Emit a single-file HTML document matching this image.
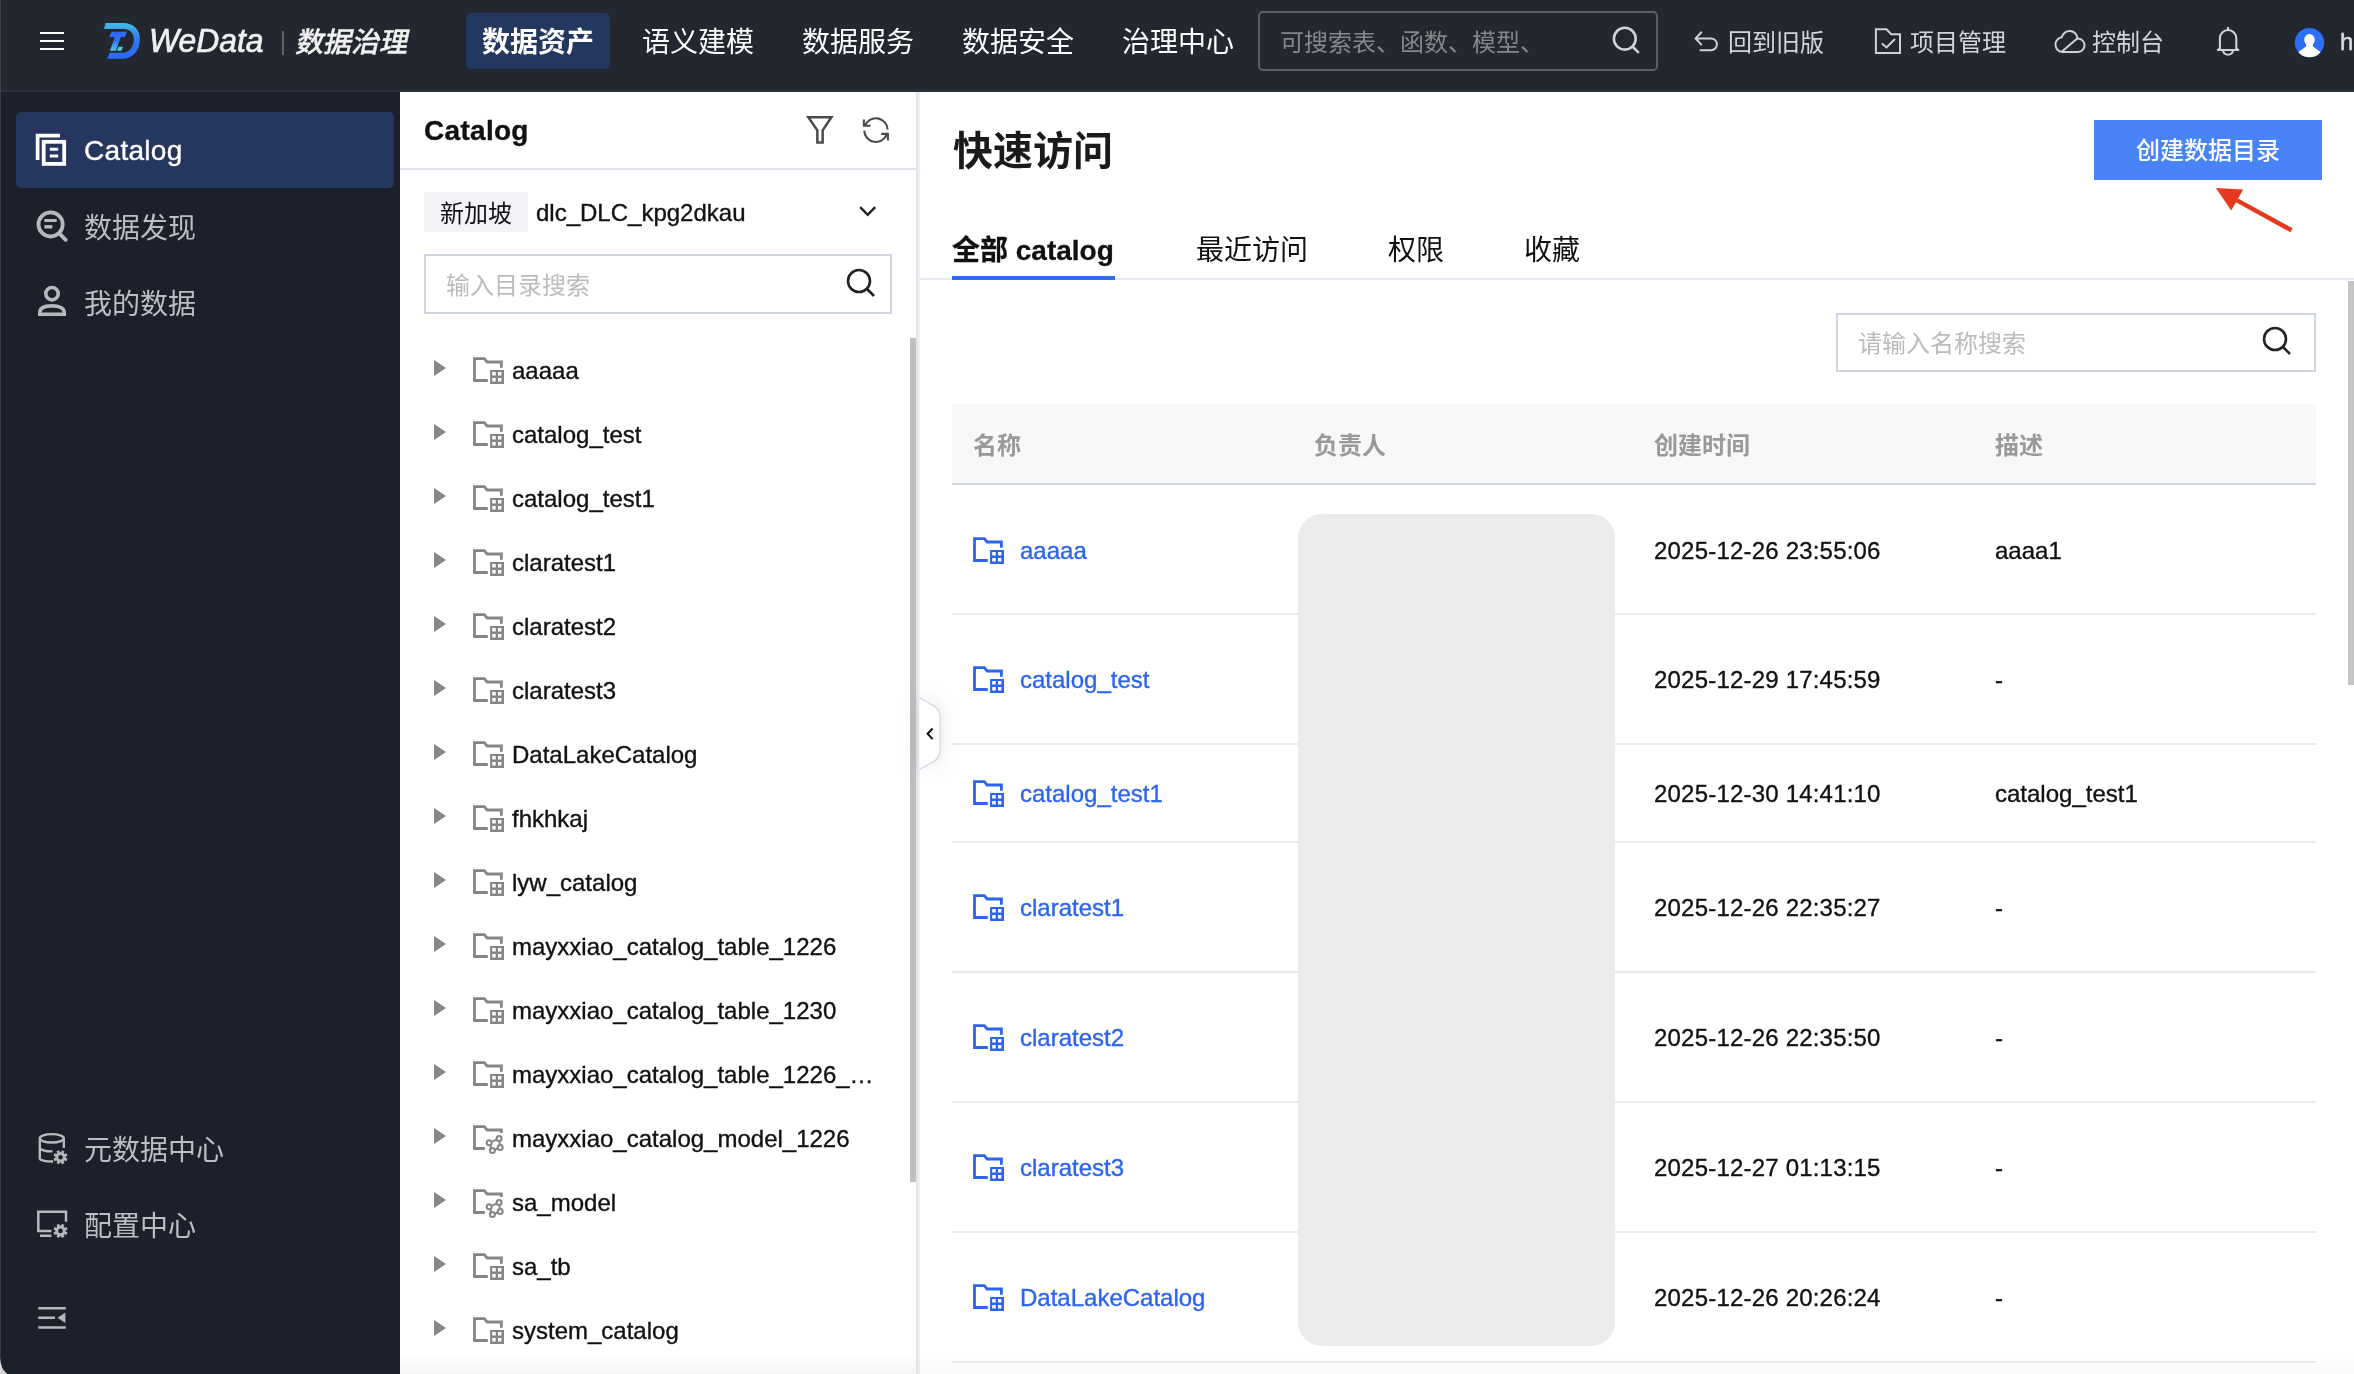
<!DOCTYPE html>
<html lang="zh-CN">
<head>
<meta charset="utf-8">
<title>WeData 数据治理 - Catalog</title>
<style>
*{box-sizing:border-box;margin:0;padding:0}
html,body{width:2354px;height:1374px;overflow:hidden;background:#fff}
@media (max-width:1300px){html{zoom:.5}}
body{font-family:"Liberation Sans","Noto Sans CJK SC",sans-serif;color:#111;position:relative;-webkit-font-smoothing:antialiased;will-change:transform}
.abs{position:absolute}
svg{display:block;overflow:visible}
/* ---------- top bar ---------- */
#top{position:absolute;left:0;top:0;width:2354px;height:92px;background:#232730;border-bottom:2px solid #2d313c}
#top .t{position:absolute;white-space:nowrap;line-height:40px;height:40px;color:#fff}
.nav{font-size:28px;top:23px}
.rt{font-size:24px;top:22.500px;color:#d3d5da !important}
#navact{position:absolute;left:466px;top:13px;width:144px;height:56px;border-radius:5px;background:#243761}
#tsearch{position:absolute;left:1258px;top:11px;width:400px;height:60px;border:2px solid #5d5e61;border-radius:5px}
/* ---------- sidebar ---------- */
#side{position:absolute;left:0;top:92px;width:400px;height:1282px;background:#1c202a}
#side .it{position:absolute;left:84px;font-size:28px;line-height:40px;height:40px;color:#bcbec3;white-space:nowrap}
#sact{position:absolute;left:16px;top:20px;width:378px;height:76px;border-radius:5px;background:#25375f}
/* ---------- catalog panel ---------- */
#cat{position:absolute;left:400px;top:92px;width:518px;height:1282px;background:#fff;border-right:2px solid #dfe3ec}
#cathead{position:absolute;left:0;top:0;width:516px;height:78px;border-bottom:2px solid #dde1ea}
.row{position:absolute;left:0;width:500px;height:64px}
.row .tri{position:absolute;left:34px;top:22px;width:0;height:0;border-left:12.500px solid #898989;border-top:8px solid transparent;border-bottom:8px solid transparent}
.row .nm{position:absolute;left:112px;top:13px;font-size:24px;line-height:40px;color:#111;white-space:nowrap;-webkit-text-stroke:.35px}
.row svg{position:absolute;left:73px;top:19px}
/* ---------- main ---------- */
#main{position:absolute;left:918px;top:92px;width:1436px;height:1282px;background:#fff}
.tab{position:absolute;top:139px;font-size:28px;line-height:40px;white-space:nowrap;color:#111}
.th{position:absolute;top:334px;font-size:24px;line-height:40px;font-weight:bold;color:#999;white-space:nowrap}
.tr{position:absolute;left:34px;width:1364px;border-bottom:2px solid #e7eaf1}
.tr .c{position:absolute;-webkit-text-stroke:.35px;font-size:24px;line-height:40px;white-space:nowrap;color:#111;top:50%;margin-top:-18.500px}
.tr .c1{left:68px;color:#2b64f0}
.tr .c3{left:702px;letter-spacing:.2px}
.tr .c4{left:1043px}
.tr svg{position:absolute;left:21px;top:50%;margin-top:-12.500px}
</style>
</head>
<body>

<!-- ================= TOP BAR ================= -->
<div id="top">
  <svg class="abs" style="left:40px;top:31px" width="24" height="20" viewBox="0 0 24 20"><path d="M0 2h24M0 10h24M0 18h24" stroke="#fff" stroke-width="2" fill="none"/></svg>
  <!-- logo -->
  <svg class="abs" style="left:100px;top:14px" width="180" height="54" viewBox="0 0 2354 706">
    <defs>
      <linearGradient id="lg" x1="0" y1="0" x2="0" y2="1"><stop offset="0" stop-color="#43bce6"/><stop offset="0.5" stop-color="#2f74f5"/><stop offset="1" stop-color="#2d6bf6"/></linearGradient>
      <linearGradient id="lt" x1="0" y1="0" x2="0" y2="1"><stop offset="0" stop-color="#2d68f6"/><stop offset="0.45" stop-color="#2f70f5"/><stop offset="1" stop-color="#55c8e0"/></linearGradient>
    </defs>
    <path d="M72 118H300C440 118 522 205 522 330C522 480 430 585 290 585H93L128 507H290C380 507 442 430 442 330C442 250 392 197 300 197H50Z" fill="url(#lg)"/>
    <path d="M152 232H352L326 300H272L208 482H130L194 300H120Z" fill="url(#lt)"/>
    <path d="M240 428H300L282 482H222Z" fill="#55c8e0"/>
  </svg>
  <div class="t" style="left:149px;top:21px;font-size:33px;font-style:italic;letter-spacing:0;color:#f0f0f1;transform:scaleX(.965);transform-origin:0 0;-webkit-text-stroke:0.7px #f0f0f1">WeData</div>
  <div class="abs" style="left:282px;top:31px;width:2px;height:24px;background:#5d616b"></div>
  <div class="t" style="left:297px;top:23px;font-size:28px;font-weight:500;color:#f0f0f1;transform:skewX(-12deg);-webkit-text-stroke:.4px">数据治理</div>

  <div id="navact"></div>
  <div class="t nav" style="left:482px;font-weight:bold">数据资产</div>
  <div class="t nav" style="left:642px">语义建模</div>
  <div class="t nav" style="left:802px">数据服务</div>
  <div class="t nav" style="left:962px">数据安全</div>
  <div class="t nav" style="left:1122px">治理中心</div>

  <div id="tsearch"></div>
  <div class="t" style="left:1280px;top:22.500px;font-size:24px;color:#868789">可搜索表、函数、模型、</div>
  <svg class="abs" style="left:1611px;top:25px" width="32" height="32" viewBox="0 0 32 32"><circle cx="13.800" cy="13.700" r="10.900" stroke="#d2d3d5" stroke-width="2.600" fill="none"/><path d="M21.500 21.500l6.300 6.300" stroke="#d2d3d5" stroke-width="2.600" fill="none"/></svg>

  <svg class="abs" style="left:1693px;top:29px" width="26" height="24" viewBox="0 0 26 24"><path d="M8.800 2.700L2.600 9.400 8.800 16.100M2.600 9.400H18a5.900 5.900 0 0 1 0 11.800H6.600" stroke="#cfd1d6" stroke-width="2" fill="none"/></svg>
  <div class="t rt" style="left:1728px">回到旧版</div>
  <svg class="abs" style="left:1873px;top:27px" width="30" height="28" viewBox="0 0 30 28"><path d="M2.900 2.300h10.600l4.700 5H27V26H2.900z" stroke="#cfd1d6" stroke-width="2" fill="none"/><path d="M8.900 16.600l4.600 3.800L22 12" stroke="#cfd1d6" stroke-width="2" fill="none"/></svg>
  <div class="t rt" style="left:1910px">项目管理</div>
  <svg class="abs" style="left:2053px;top:28px" width="34" height="28" viewBox="0 0 34 28"><path d="M9.200 24A7.400 7.400 0 0 1 8.800 9.300 8 8 0 0 1 24.600 10.600 6.700 6.700 0 0 1 25.100 24z" stroke="#cfd1d6" stroke-width="2" fill="none" stroke-linejoin="round"/><path d="M9 23.600L24.200 10.400" stroke="#cfd1d6" stroke-width="2" fill="none"/></svg>
  <div class="t rt" style="left:2092px">控制台</div>
  <svg class="abs" style="left:2215px;top:26px" width="26" height="30" viewBox="0 0 26 30"><path d="M13.050 .9v3M4.900 22.300V12.200a8.200 8.200 0 0 1 16.400 0v10.100l2 1.700H2.900z M8.200 24.500a4.800 4.200 0 0 0 9.600 0" stroke="#cfd1d6" stroke-width="2.100" fill="none" stroke-linejoin="round"/></svg>
  <svg class="abs" style="left:2294px;top:27px" width="32" height="32" viewBox="0 0 32 32"><defs><clipPath id="av"><circle cx="15.500" cy="15.600" r="14.700"/></clipPath></defs><circle cx="15.500" cy="15.600" r="14.700" fill="#2d6ef5"/><g clip-path="url(#av)" fill="#fff"><ellipse cx="15.500" cy="12.900" rx="5.300" ry="5.800"/><path d="M12 17h7v2.500l7.500 5.500V32h-22v-7L12 19.500z"/></g></svg>
  <div class="t" style="left:2340px;top:22px;font-size:24px;color:#dcdcdc;-webkit-text-stroke:0.5px #dcdcdc">h</div>
</div>

<!-- ================= SIDEBAR ================= -->
<div id="side">
  <div id="sact"></div>
  <!-- catalog icon -->
  <svg class="abs" style="left:35px;top:41px" width="32" height="34" viewBox="0 0 32 34"><path d="M2.600 27V2.600H25" stroke="#fff" stroke-width="3.700" fill="none"/><rect x="8.700" y="8.800" width="20.500" height="22.100" stroke="#fff" stroke-width="3.800" fill="none"/><path d="M14.800 16.200h8.400M14.800 22.900h8.400" stroke="#fff" stroke-width="3" fill="none"/></svg>
  <div class="it" style="top:39px;color:#fff;letter-spacing:.3px;-webkit-text-stroke:.35px">Catalog</div>
  <!-- discover icon -->
  <svg class="abs" style="left:36px;top:117px" width="32" height="33" viewBox="0 0 32 33"><circle cx="14.600" cy="15.400" r="12.100" stroke="#b6b8bc" stroke-width="3.800" fill="none"/><path d="M23.500 24.600l6.200 6.200" stroke="#b6b8bc" stroke-width="3.800" fill="none" stroke-linecap="round"/><path d="M8.400 11.500h12.300" stroke="#b6b8bc" stroke-width="3" fill="none"/><path d="M8.400 17.800h8" stroke="#b6b8bc" stroke-width="3.400" fill="none"/></svg>
  <div class="it" style="top:116.500px">数据发现</div>
  <!-- my data icon -->
  <svg class="abs" style="left:37px;top:193px" width="30" height="32" viewBox="0 0 30 32"><circle cx="15" cy="8.700" r="6.200" stroke="#b6b8bc" stroke-width="3.600" fill="none"/><path d="M2.800 29.200v-1.500c0-4.500 5-6.800 12.200-6.800s12.300 2.300 12.300 6.800v1.500z" stroke="#b6b8bc" stroke-width="3.600" fill="none"/></svg>
  <div class="it" style="top:192.500px">我的数据</div>

  <!-- meta center -->
  <svg class="abs" style="left:38px;top:1040px" width="32" height="34" viewBox="0 0 32 34"><g stroke="#b6b8bc" stroke-width="2.400" fill="none"><ellipse cx="13.800" cy="6.300" rx="12" ry="4.200"/><path d="M1.800 6.300v20c0 1.800 5 3.200 13.400 3.200M25.800 6.300V16M1.800 15.800c0 1.800 5 3.600 12.700 3.600"/></g><circle cx="22.5" cy="25.2" r="3.800" stroke="#b6b8bc" stroke-width="3" fill="none"/><path d="M26.9 27.0L29.0 27.9M24.3 29.6L25.2 31.7M20.7 29.6L19.8 31.7M18.1 27.0L16.0 27.9M18.1 23.4L16.0 22.5M20.7 20.8L19.8 18.7M24.3 20.8L25.2 18.7M26.9 23.4L29.0 22.5" stroke="#b6b8bc" stroke-width="2.800" fill="none"/></svg>
  <div class="it" style="top:1038.500px">元数据中心</div>
  <!-- config center -->
  <svg class="abs" style="left:36px;top:1117px" width="34" height="32" viewBox="0 0 34 32"><path d="M15.400 22H2.300V2.700H30v10.100M4 26.700h11.400" stroke="#b6b8bc" stroke-width="2.500" fill="none"/><circle cx="24.5" cy="21.9" r="3.800" stroke="#b6b8bc" stroke-width="3" fill="none"/><path d="M28.9 23.7L31.0 24.6M26.3 26.3L27.2 28.4M22.7 26.3L21.8 28.4M20.1 23.7L18.0 24.6M20.1 20.1L18.0 19.2M22.7 17.5L21.8 15.4M26.3 17.5L27.2 15.4M28.9 20.1L31.0 19.2" stroke="#b6b8bc" stroke-width="2.800" fill="none"/></svg>
  <div class="it" style="top:1114.500px">配置中心</div>
  <!-- collapse -->
  <svg class="abs" style="left:38px;top:1214px" width="28" height="24" viewBox="0 0 28 24"><path d="M.3 2.250h27.500M.3 11.750H17M.3 21.450h27.500" stroke="#b6b8bc" stroke-width="2.500" fill="none"/><path d="M27.400 6.600v10.500l-7.900-5.250z" fill="#b6b8bc"/></svg>
  <svg class="abs" style="left:0;top:1266px" width="8" height="16" viewBox="0 0 8 16"><path d="M0 0Q.8 11.500 7.500 16H0z" fill="#d2d2d2"/></svg>
</div>
<div class="abs" style="left:0;top:0;width:1px;height:1374px;background:rgba(255,255,255,.12)"></div>

<!-- ================= CATALOG PANEL ================= -->
<div id="cat">
  <svg width="0" height="0" style="position:absolute"><defs>
    <g id="ft"><path d="M14.800 23.500H1.500V1.600h9.800l2.800 3.400h14.300v5.700" stroke="currentColor" stroke-width="2.800" fill="none"/><path fill="currentColor" fill-rule="evenodd" d="M17.100 13h13.900v14H17.100zM19.200 15.100h3.500v3.400h-3.500zM25 15.100h3.400v3.400H25zM19.200 21h3.500v3.400h-3.500zM25 21h3.400v3.400H25z"/></g>
    <g id="fm"><path d="M11.900 23.500H1.500V1.600h9.800l2.800 3.400h14.300v3.100" stroke="currentColor" stroke-width="2.800" fill="none"/><g stroke="currentColor" stroke-width="2" fill="none"><circle cx="26.100" cy="13.400" r="2.500"/><circle cx="16.200" cy="17.800" r="2.500"/><circle cx="27.200" cy="22.400" r="2.500"/><circle cx="19.400" cy="25.600" r="2.500"/><path d="M23.800 14.400l-5.300 2.400M17.200 20.100l1.300 3.200M21.700 24.700l3.200-1.300M26.400 15.900l.5 4"/></g></g>
  </defs></svg>
  <div id="cathead">
    <div class="abs" style="left:24px;top:19px;font-size:28px;line-height:40px;font-weight:bold;color:#111;-webkit-text-stroke:.35px;letter-spacing:.3px">Catalog</div>
    <svg class="abs" style="left:405px;top:23px" width="30" height="30" viewBox="0 0 30 30"><path d="M3.300 2.300H26.400L17.650 15.300V27.550H12.350V15.300z" stroke="#4b4b4b" stroke-width="2.500" fill="none" stroke-linejoin="miter"/></svg>
    <svg class="abs" style="left:462px;top:24px" width="28" height="28" viewBox="0 0 28 28"><g stroke="#4b4b4b" stroke-width="2.100" fill="none"><path d="M2.900 10A11.700 11.700 0 0 1 25.600 13.500"/><path d="M2.200 14.600A11.700 11.700 0 0 0 24.900 18.200"/><path d="M1.900 3.400v6.300h6.600M19.200 17.900h6.700v6.600"/></g></svg>
  </div>
  <div class="abs" style="left:24px;top:100px;width:104px;height:40px;background:#f3f4f8"></div>
  <div class="abs" style="left:40px;top:102px;font-size:24px;line-height:40px;color:#111;white-space:nowrap">新加坡</div>
  <div class="abs" style="left:136px;top:101px;font-size:24px;line-height:40px;color:#111;white-space:nowrap;-webkit-text-stroke:.35px">dlc_DLC_kpg2dkau</div>
  <svg class="abs" style="left:459px;top:114px" width="20" height="12" viewBox="0 0 20 12"><path d="M1.200 1.200l7.500 7.700 7.500-7.700" stroke="#222" stroke-width="2.400" fill="none"/></svg>
  <div class="abs" style="left:24px;top:162px;width:468px;height:60px;border:2px solid #cfd5e1"></div>
  <div class="abs" style="left:46px;top:174px;font-size:24px;line-height:40px;color:#bbb;white-space:nowrap">输入目录搜索</div>
  <svg class="abs" style="left:446px;top:176px" width="30" height="30" viewBox="0 0 30 30"><circle cx="13" cy="13" r="11" stroke="#222" stroke-width="2.600" fill="none"/><path d="M21 21l7 7" stroke="#222" stroke-width="2.600" fill="none"/></svg>
  <div class="row" style="top:246px"><i class="tri"></i><svg width="32" height="30" viewBox="0 0 32 30"><use href="#ft" color="#858585"/></svg><span class="nm">aaaaa</span></div>
  <div class="row" style="top:310px"><i class="tri"></i><svg width="32" height="30" viewBox="0 0 32 30"><use href="#ft" color="#858585"/></svg><span class="nm">catalog_test</span></div>
  <div class="row" style="top:374px"><i class="tri"></i><svg width="32" height="30" viewBox="0 0 32 30"><use href="#ft" color="#858585"/></svg><span class="nm">catalog_test1</span></div>
  <div class="row" style="top:438px"><i class="tri"></i><svg width="32" height="30" viewBox="0 0 32 30"><use href="#ft" color="#858585"/></svg><span class="nm">claratest1</span></div>
  <div class="row" style="top:502px"><i class="tri"></i><svg width="32" height="30" viewBox="0 0 32 30"><use href="#ft" color="#858585"/></svg><span class="nm">claratest2</span></div>
  <div class="row" style="top:566px"><i class="tri"></i><svg width="32" height="30" viewBox="0 0 32 30"><use href="#ft" color="#858585"/></svg><span class="nm">claratest3</span></div>
  <div class="row" style="top:630px"><i class="tri"></i><svg width="32" height="30" viewBox="0 0 32 30"><use href="#ft" color="#858585"/></svg><span class="nm">DataLakeCatalog</span></div>
  <div class="row" style="top:694px"><i class="tri"></i><svg width="32" height="30" viewBox="0 0 32 30"><use href="#ft" color="#858585"/></svg><span class="nm">fhkhkaj</span></div>
  <div class="row" style="top:758px"><i class="tri"></i><svg width="32" height="30" viewBox="0 0 32 30"><use href="#ft" color="#858585"/></svg><span class="nm">lyw_catalog</span></div>
  <div class="row" style="top:822px"><i class="tri"></i><svg width="32" height="30" viewBox="0 0 32 30"><use href="#ft" color="#858585"/></svg><span class="nm">mayxxiao_catalog_table_1226</span></div>
  <div class="row" style="top:886px"><i class="tri"></i><svg width="32" height="30" viewBox="0 0 32 30"><use href="#ft" color="#858585"/></svg><span class="nm">mayxxiao_catalog_table_1230</span></div>
  <div class="row" style="top:950px"><i class="tri"></i><svg width="32" height="30" viewBox="0 0 32 30"><use href="#ft" color="#858585"/></svg><span class="nm">mayxxiao_catalog_table_1226_…</span></div>
  <div class="row" style="top:1014px"><i class="tri"></i><svg width="32" height="30" viewBox="0 0 32 30"><use href="#fm" color="#858585"/></svg><span class="nm">mayxxiao_catalog_model_1226</span></div>
  <div class="row" style="top:1078px"><i class="tri"></i><svg width="32" height="30" viewBox="0 0 32 30"><use href="#fm" color="#858585"/></svg><span class="nm">sa_model</span></div>
  <div class="row" style="top:1142px"><i class="tri"></i><svg width="32" height="30" viewBox="0 0 32 30"><use href="#ft" color="#858585"/></svg><span class="nm">sa_tb</span></div>
  <div class="row" style="top:1206px"><i class="tri"></i><svg width="32" height="30" viewBox="0 0 32 30"><use href="#ft" color="#858585"/></svg><span class="nm">system_catalog</span></div>
  <div class="abs" style="left:510px;top:246px;width:6px;height:844px;background:#bfbfbf"></div>
  <div class="abs" style="left:0;top:1262px;width:516px;height:20px;background:linear-gradient(rgba(0,0,0,0),rgba(0,0,0,.045))"></div>
</div>

<!-- ================= MAIN ================= -->
<div id="main">
  <div class="abs" style="left:0;top:0;width:2px;height:1282px;background:#eef0f5"></div>
  <div class="abs" style="left:35px;top:31px;font-size:40px;line-height:56px;font-weight:bold;color:#1a1a1a;white-space:nowrap">快速访问</div>
  <div class="abs" style="left:1176px;top:28px;width:228px;height:60px;background:#4884f7;color:#fff;font-size:24px;line-height:60px;text-align:center;padding-top:1px;font-weight:500">创建数据目录</div>
  <svg class="abs" style="left:1288.500px;top:88px" width="90" height="60" viewBox="0 0 90 60"><path d="M84.600 50.300L30 20.400" stroke="#e63a20" stroke-width="4.500" fill="none"/><path d="M8.900 8.100L36.200 9.500 24.200 30.600z" fill="#e63a20"/></svg>

  <div class="abs" style="left:2px;top:186px;width:1434px;height:2px;background:#e5e8f0"></div>
  <div class="tab" style="left:34px;font-weight:bold;-webkit-text-stroke:.3px">全部 catalog</div>
  <div class="abs" style="left:34px;top:184px;width:163px;height:4px;background:#2f6bf2"></div>
  <div class="tab" style="left:278px">最近访问</div>
  <div class="tab" style="left:470px">权限</div>
  <div class="tab" style="left:606px">收藏</div>

  <div class="abs" style="left:918px;top:221px;width:480px;height:59px;border:2px solid #cfd5e1"></div>
  <div class="abs" style="left:940px;top:232px;font-size:24px;line-height:40px;color:#bbb;white-space:nowrap">请输入名称搜索</div>
  <svg class="abs" style="left:1344px;top:234px" width="30" height="30" viewBox="0 0 30 30"><circle cx="13" cy="13" r="11" stroke="#222" stroke-width="2.600" fill="none"/><path d="M21 21l7 7" stroke="#222" stroke-width="2.600" fill="none"/></svg>

  <div class="abs" style="left:34px;top:312px;width:1364px;height:81px;background:#f7f8fa;border-bottom:2px solid #cfd4dd"></div>
  <div class="th" style="left:55px">名称</div>
  <div class="th" style="left:396px">负责人</div>
  <div class="th" style="left:736px">创建时间</div>
  <div class="th" style="left:1077px">描述</div>
  <div class="tr" style="top:393px;height:130px"><svg width="32" height="30" viewBox="0 0 32 30"><use href="#ft" color="#2b64f0"/></svg><span class="c c1">aaaaa</span><span class="c c3">2025-12-26 23:55:06</span><span class="c c4">aaaa1</span></div>
  <div class="tr" style="top:522px;height:131px"><svg width="32" height="30" viewBox="0 0 32 30"><use href="#ft" color="#2b64f0"/></svg><span class="c c1">catalog_test</span><span class="c c3">2025-12-29 17:45:59</span><span class="c c4">-</span></div>
  <div class="tr" style="top:652px;height:99px"><svg width="32" height="30" viewBox="0 0 32 30"><use href="#ft" color="#2b64f0"/></svg><span class="c c1">catalog_test1</span><span class="c c3">2025-12-30 14:41:10</span><span class="c c4">catalog_test1</span></div>
  <div class="tr" style="top:750px;height:131px"><svg width="32" height="30" viewBox="0 0 32 30"><use href="#ft" color="#2b64f0"/></svg><span class="c c1">claratest1</span><span class="c c3">2025-12-26 22:35:27</span><span class="c c4">-</span></div>
  <div class="tr" style="top:880px;height:131px"><svg width="32" height="30" viewBox="0 0 32 30"><use href="#ft" color="#2b64f0"/></svg><span class="c c1">claratest2</span><span class="c c3">2025-12-26 22:35:50</span><span class="c c4">-</span></div>
  <div class="tr" style="top:1010px;height:131px"><svg width="32" height="30" viewBox="0 0 32 30"><use href="#ft" color="#2b64f0"/></svg><span class="c c1">claratest3</span><span class="c c3">2025-12-27 01:13:15</span><span class="c c4">-</span></div>
  <div class="tr" style="top:1140px;height:131px"><svg width="32" height="30" viewBox="0 0 32 30"><use href="#ft" color="#2b64f0"/></svg><span class="c c1">DataLakeCatalog</span><span class="c c3">2025-12-26 20:26:24</span><span class="c c4">-</span></div>
  <div class="abs" style="left:380px;top:422px;width:317px;height:832px;border-radius:24px;background:#ebebeb"></div>
  <div class="abs" style="left:1430px;top:189px;width:6px;height:404px;background:#c4c4c4"></div>
  <!-- collapse handle -->
  <svg class="abs" style="left:0;top:600px;filter:drop-shadow(0 0 10px rgba(0,0,0,.10))" width="30" height="84" viewBox="0 0 30 84"><path d="M1.500 5.700L15.500 13.800Q22.100 17.600 22.100 25V58.200Q22.100 65.600 15.500 69.400L1.500 77.500" fill="#fff" stroke="#ccd4e2" stroke-width="1.200"/><path d="M14.600 36.500L9.600 41.800 14.600 47.100" stroke="#111" stroke-width="2" fill="none"/></svg>
  <div class="abs" style="left:0;top:1258px;width:1436px;height:24px;background:linear-gradient(rgba(0,0,0,0),rgba(0,0,0,.025))"></div>
</div>

</body>
</html>
